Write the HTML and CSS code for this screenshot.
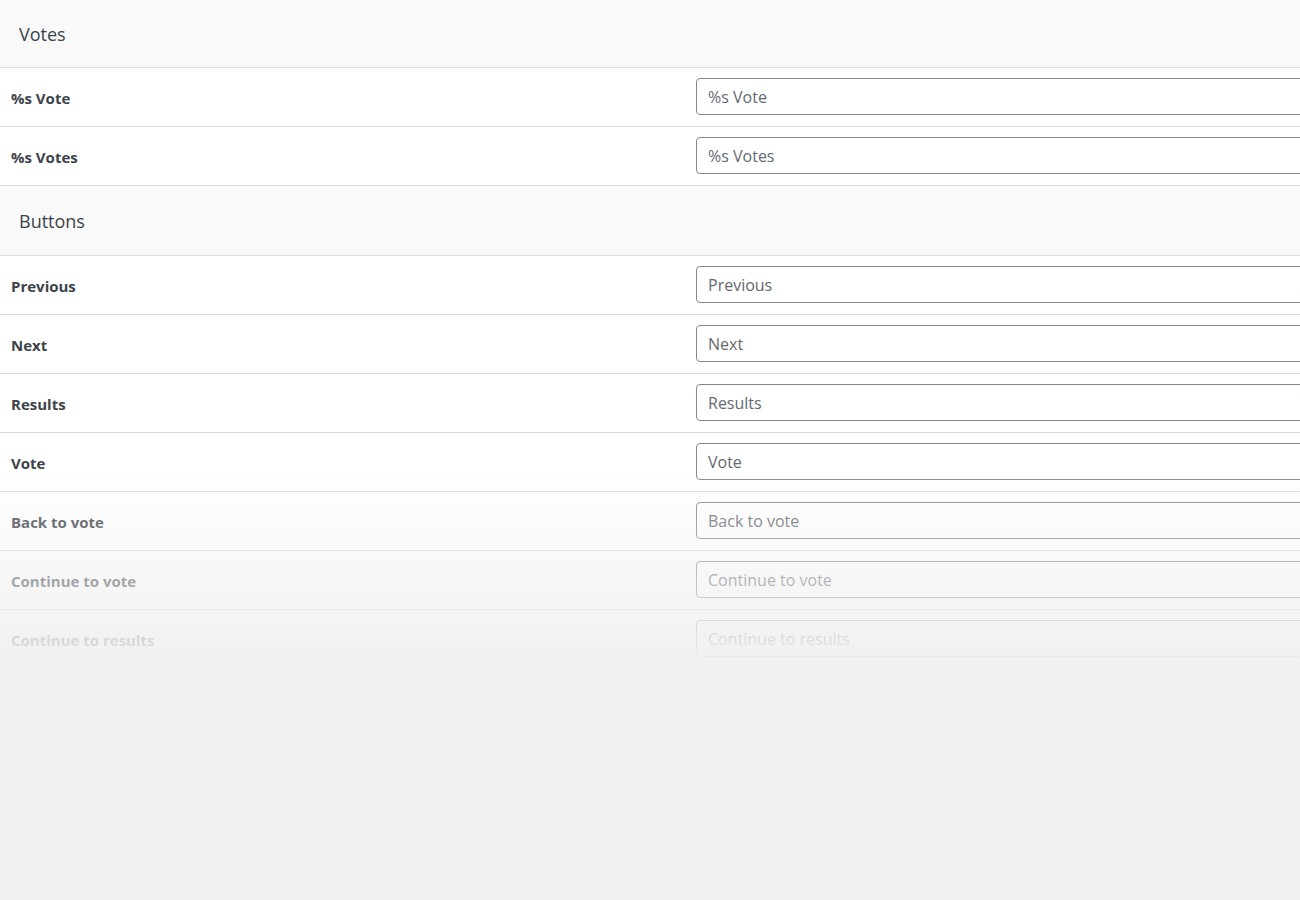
FILE: index.html
```html
<!DOCTYPE html>
<html>
<head>
<meta charset="utf-8">
<link rel="stylesheet" href="styles.css">
</head>
<body>
<div class="page">
  <div class="section">
    <div class="section-head first">Votes</div>
    <div class="row"><div class="label">%s Vote</div><div class="field"><input class="text" type="text" value="%s Vote"></div></div>
    <div class="row"><div class="label">%s Votes</div><div class="field"><input class="text" type="text" value="%s Votes"></div></div>
  </div>
  <div class="section">
    <div class="section-head">Buttons</div>
    <div class="row"><div class="label">Previous</div><div class="field"><input class="text" type="text" value="Previous"></div></div>
    <div class="row"><div class="label">Next</div><div class="field"><input class="text" type="text" value="Next"></div></div>
    <div class="row"><div class="label">Results</div><div class="field"><input class="text" type="text" value="Results"></div></div>
    <div class="row"><div class="label">Vote</div><div class="field"><input class="text" type="text" value="Vote"></div></div>
    <div class="row"><div class="label">Back to vote</div><div class="field"><input class="text" type="text" value="Back to vote"></div></div>
    <div class="row"><div class="label">Continue to vote</div><div class="field"><input class="text" type="text" value="Continue to vote"></div></div>
    <div class="row"><div class="label">Continue to results</div><div class="field"><input class="text" type="text" value="Continue to results"></div></div>
  </div>
  <div class="fade"></div>
</div>
</body>
</html>
```
FILE: styles.css
```css
html, body {
  margin: 0;
  padding: 0;
  background: #f0f0f0;
  overflow: hidden;
}
body {
  font-family: "Open Sans", "Noto Sans", sans-serif;
  color: #3c434a;
}
.page {
  position: relative;
  width: 1300px;
  overflow: hidden;
}
.section {
  background: #fff;
}
.section-head {
  background: #f9f9f9;
  border-bottom: 1px solid #dcdcde;
  height: 69px;
  display: flex;
  align-items: center;
  padding-left: 19px;
  font-size: 18px;
  color: #3c434a;
}
.section-head.first {
  height: 67px;
}
.row {
  display: grid;
  grid-template-columns: 696px 1fr;
  height: 58px;
  border-bottom: 1px solid #dcdcde;
  align-items: center;
}
.label {
  padding-left: 11px;
  padding-top: 1px;
  font-size: 15px;
  font-weight: 700;
  color: #3c434a;
}
.field {
  min-width: 0;
  align-self: start;
  padding-top: 10px;
}
.text {
  display: block;
  box-sizing: border-box;
  width: 700px;
  height: 37px;
  margin: 0;
  border: 1px solid #7e8993;
  border-radius: 4px;
  padding: 0 11px;
  font-family: "Open Sans", "Noto Sans", sans-serif;
  font-size: 16px;
  color: #646970;
  background: #fff;
  outline: none;
}
.fade {
  position: absolute;
  left: 0;
  right: 0;
  top: 470px;
  height: 430px;
  background: linear-gradient(to bottom, rgba(240,240,240,0) 0px, rgba(240,240,240,0.85) 170px, #f0f0f0 200px, #f0f0f0 100%);
}
.page::after {
  content: "";
  display: block;
  height: 240px;
}
```
